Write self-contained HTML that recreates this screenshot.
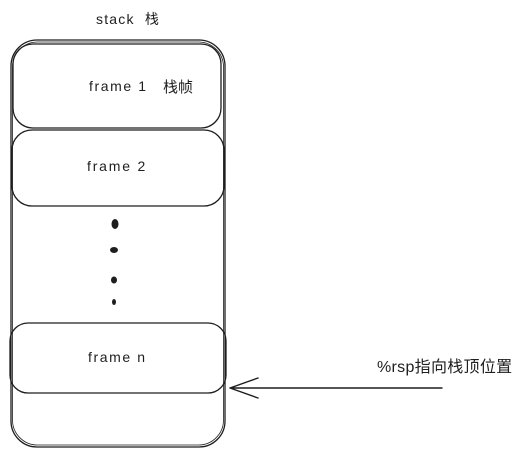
<!DOCTYPE html>
<html><head><meta charset="utf-8"><style>
body{margin:0;background:#fff;width:521px;height:457px;overflow:hidden}
svg{display:block}
text{font-family:"Liberation Sans","Noto Sans CJK SC",sans-serif;fill:#1e1e1e}
</style></head><body>
<svg width="521" height="457" viewBox="0 0 521 457" fill="none" stroke="#1e1e1e" stroke-linecap="round">
<rect x="11" y="40" width="214" height="407" rx="26" stroke-width="1.3"/>
<rect x="12.5" y="42" width="211" height="403" rx="25" stroke-width="0.8"/>
<rect x="13" y="44" width="208" height="84" rx="20" stroke-width="1.3"/>
<rect x="12" y="130" width="212" height="76" rx="20" stroke-width="1.3"/>
<rect x="10" y="323" width="216" height="70" rx="18" stroke-width="1.3"/>
<g fill="#1e1e1e" stroke="none">
<ellipse cx="115" cy="224" rx="3.5" ry="5"/>
<ellipse cx="114" cy="250" rx="4" ry="3"/>
<ellipse cx="114" cy="280" rx="3" ry="3.5"/>
<ellipse cx="114" cy="302" rx="2" ry="3"/>
</g>
<path d="M442 388 L230 388 M230 388 L258 378 M230 388 L258 398" stroke-width="1.4"/>
<g stroke="none">
<text x="96" y="24" font-size="14" letter-spacing="1.2">stack&#160;&#160;栈</text>
<text x="89" y="91" font-size="14" letter-spacing="1.6">frame 1</text>
<text x="163" y="92" font-size="15">栈帧</text>
<text x="87" y="171" font-size="14" letter-spacing="1.8">frame 2</text>
<text x="88" y="362" font-size="14" letter-spacing="1.6">frame n</text>
<text x="377" y="372" font-size="16" letter-spacing="0.3">%rsp指向栈顶位置</text>
</g>
</svg>
</body></html>
